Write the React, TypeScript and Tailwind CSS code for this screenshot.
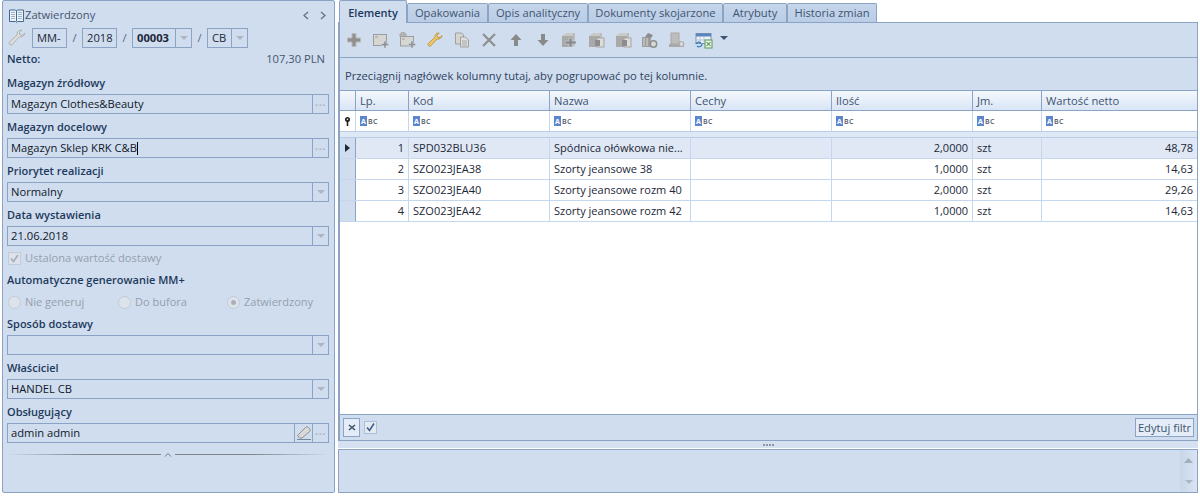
import React from "react";

const gridCols = "grid grid-cols-[16px_53px_141px_141px_141px_141px_69px_155px]";

const rows = [
  { lp: 1, kod: "SPD032BLU36", nazwa: "Spódnica ołówkowa nie...", ilosc: "2,0000", wartosc: "48,78" },
  { lp: 2, kod: "SZO023JEA38", nazwa: "Szorty jeansowe 38", ilosc: "1,0000", wartosc: "14,63" },
  { lp: 3, kod: "SZO023JEA40", nazwa: "Szorty jeansowe rozm 40", ilosc: "2,0000", wartosc: "29,26" },
  { lp: 4, kod: "SZO023JEA42", nazwa: "Szorty jeansowe rozm 42", ilosc: "1,0000", wartosc: "14,63" },
];

const headers = ["Lp.", "Kod", "Nazwa", "Cechy", "Ilość", "Jm.", "Wartość netto"];
const tabs = [
  { name: "Opakowania", w: "w-[81px]" },
  { name: "Opis analityczny", w: "w-[100px]" },
  { name: "Dokumenty skojarzone", w: "w-[135px]" },
  { name: "Atrybuty", w: "w-[64px]" },
  { name: "Historia zmian", w: "w-[90px]" },
];

function Caret({ color = "#abb5c3" }: { color?: string }) {
  return (
    <svg width="8" height="4" viewBox="0 0 8 4">
      <path d="M0 0h8L4 4z" fill={color} />
    </svg>
  );
}

function Dots() {
  return <span className="text-[11px] font-bold leading-none tracking-[0.5px] text-[#a9b4c4]">···</span>;
}

function SideButton({ children, w = "w-4" }: { children: React.ReactNode; w?: string }) {
  return (
    <div className={`flex h-full ${w} shrink-0 items-center justify-center border-l border-[#8ba3c4]`}>{children}</div>
  );
}

function Field({
  label,
  value,
  cursor,
  children,
}: {
  label: string;
  value?: string;
  cursor?: boolean;
  children: React.ReactNode;
}) {
  return (
    <div className="mb-1 flex flex-col">
      <div className="flex h-5 items-center pb-[3px] text-[11px] font-semibold text-[#1e395b]">{label}</div>
      <div className="mr-[5px] flex h-5 items-center justify-between border border-[#8ba3c4]">
        <span className="flex h-full items-center pl-[3px] text-[#101828]">
          {value}
          {cursor && <span className="h-[13px] w-px bg-black" />}
        </span>
        <div className="flex h-full">{children}</div>
      </div>
    </div>
  );
}

function BookIcon() {
  return (
    <svg width="15" height="14" viewBox="0 0 15 14" className="shrink-0">
      <path d="M.5 1h6l1 1 1-1h6v11.500h-6l-1 1-1-1h-6z" fill="#eef3f8" stroke="#3d6a94" />
      <path d="M7.500 2v10.500" stroke="#3d6a94" />
      <path d="M2 3.500h4M2 5.500h4M2 7.500h4M2 9.500h4M9 3.500h4M9 5.500h4M9 7.500h4M9 9.500h4" stroke="#9db2c8" />
    </svg>
  );
}

function WrenchIcon({ fill, stroke, size = 16 }: { fill: string; stroke: string; size?: number }) {
  return (
    <svg width={size} height={size} viewBox="0 0 16 16">
      <path
        d="M15 3.500a3.800 3.800 0 0 1-5 3.400L4 13.600a1.700 1.700 0 0 1-2.600-2.200L8 5.300A3.800 3.800 0 0 1 12.200 1L10 3.400l1 1.900 2 .3z"
        fill={fill}
        stroke={stroke}
        strokeWidth="0.800"
      />
    </svg>
  );
}

function Plus() {
  return (
    <svg width="16" height="16" viewBox="0 0 16 16">
      <path d="M6 1.500h4v4.500h4.500v4H10v4.500H6V10H1.500V6H6z" fill="#8f8f8f" stroke="#b9b9b9" />
    </svg>
  );
}

function WindowPlus({ gear }: { gear?: boolean }) {
  return (
    <svg width="18" height="17" viewBox="0 0 18 17">
      {gear && <circle cx="4" cy="3.500" r="3.200" fill="#b5b5b5" stroke="#9c9c9c" strokeDasharray="1.500 1" />}
      <rect x="1.500" y={gear ? 4.500 : 2.500} width="13" height={gear ? 9.500 : 11} fill="#d6d6d2" stroke="#9d9d9d" />
      <path d={gear ? "M3 7h3" : "M3 5h3"} stroke="#9d9d9d" />
      <path d="M12 9h2v2.500h2.500v2H14V16h-2v-2.500H9.500v-2H12z" fill="#8f8f8f" stroke="#cfddef" strokeWidth="0.500" />
    </svg>
  );
}

function CopyIcon() {
  return (
    <svg width="16" height="16" viewBox="0 0 16 16">
      <path d="M1.500 1h6l2 2v9h-8z" fill="#d5d5d2" stroke="#a0a0a0" />
      <path d="M6.500 5h5l3 3v7h-8z" fill="#dededb" stroke="#a0a0a0" />
      <path d="M8 9h5M8 11h5M8 13h5" stroke="#a8a8a8" />
    </svg>
  );
}

function CrossIcon() {
  return (
    <svg width="16" height="16" viewBox="0 0 16 16">
      <path d="M2 2l12 12M14 2L2 14" stroke="#8e8e8e" strokeWidth="2.200" />
    </svg>
  );
}

function ArrowIcon({ down }: { down?: boolean }) {
  return (
    <svg width="12" height="14" viewBox="0 0 12 14">
      <path d={down ? "M4 1h4v6h3.500L6 13 .5 7H4z" : "M4 13h4V7h3.500L6 1 .5 7H4z"} fill="#8a8a8a" />
    </svg>
  );
}

function BoxIcon({ kind }: { kind: "plus" | "in" | "out" }) {
  return (
    <svg width="17" height="16" viewBox="0 0 17 16">
      <path d="M1 4l4-3h8v3z" fill="#c9c9c6" />
      <rect x="1" y="4" width="11" height="11" fill="#a9a9a7" />
      <rect x="12" y="1" width="2" height="13" fill="#bcbcba" />
      {kind === "plus" ? (
        <path d="M8 6h3v3h4v3h-4v3H8v-3H4V9h4z" fill="#8c8c8c" stroke="#cfddef" strokeWidth="0.500" />
      ) : (
        <>
          <rect x="9" y="6" width="7" height="9" fill="#dcdcda" stroke="#a5a5a5" />
          <rect x="7" y="8" width="5" height="6" fill="#8c8c8c" />
        </>
      )}
    </svg>
  );
}

function GearBoxIcon() {
  return (
    <svg width="18" height="17" viewBox="0 0 18 17">
      <rect x="1" y="5" width="9" height="10" fill="#9e9e9c" />
      <path d="M4 5l3-4 5 2-2 3z" fill="#8c8c8c" />
      <path d="M3 6v8M6 6v8" stroke="#d5d5d3" />
      <circle cx="12.500" cy="12" r="3.200" fill="#dadad8" stroke="#8e8e8e" strokeWidth="1.500" />
    </svg>
  );
}

function ServerIcon() {
  return (
    <svg width="18" height="17" viewBox="0 0 18 17">
      <rect x="3" y="1" width="8" height="11" fill="#bdbdbb" stroke="#a8a8a6" />
      <rect x="1" y="12" width="15" height="3" fill="#a8a8a6" />
      <circle cx="13.500" cy="12" r="2.500" fill="#d7d7d5" stroke="#a5a5a3" />
    </svg>
  );
}

function ExcelIcon() {
  return (
    <svg width="18" height="17" viewBox="0 0 18 17">
      <rect x="1" y="1.500" width="15" height="10" fill="#eef3f8" stroke="#7d93ad" />
      <rect x="1" y="1.500" width="15" height="3" fill="#5b86bd" />
      <path d="M5 5v6M9 5v6M2 8h13" stroke="#b8c7d9" />
      <path d="M1 12a3 3 0 0 1 5-1M7 12a3 3 0 0 1-5 2" fill="none" stroke="#2f7fc1" strokeWidth="1.200" />
      <rect x="10" y="8" width="7" height="8" fill="#e8f1e4" stroke="#5d9a5e" />
      <path d="M11.500 10l4 4M15.500 10l-4 4" stroke="#2f7a34" />
    </svg>
  );
}

function EraserIcon() {
  return (
    <svg width="16" height="16" viewBox="0 0 16 16">
      <path d="M1.500 10.500L9.500 2.500a2 2 0 0 1 3 0l1 1a2 2 0 0 1 0 3L6 13H3.500z" fill="#d9d9d9" stroke="#8f8f8f" />
      <path d="M1 14.500h14" stroke="#7c8796" />
    </svg>
  );
}

function AbcIcon() {
  return (
    <span className="flex items-center gap-[1px] leading-none">
      <span className="flex h-[10px] w-[7px] items-center justify-center bg-[#5b86cf] text-[7px] font-bold text-white">A</span>
      <span className="text-[7px] font-semibold tracking-[0.3px] text-[#4c5566]">BC</span>
    </span>
  );
}

function ToolButton({ children }: { children: React.ReactNode }) {
  return <div className="flex h-full w-[26.9px] shrink-0 items-center justify-center">{children}</div>;
}

function RadioItem({ label, checked, w }: { label: string; checked?: boolean; w: string }) {
  return (
    <div className={`flex items-center gap-[4px] ${w}`}>
      <span className="flex h-[13px] w-[13px] items-center justify-center rounded-full border border-[#c3cbd6] bg-[#dde3ea]">
        {checked && <span className="h-[5px] w-[5px] rounded-full bg-[#a9b0ba]" />}
      </span>
      <span className="pb-px text-[11px] text-[#969fac]">{label}</span>
    </div>
  );
}

export default function App(): React.JSX.Element {
  return (
    <div
      className="flex h-[496px] w-[1200px] items-start overflow-hidden whitespace-nowrap bg-white pl-[2px] text-[11.2px] leading-none"
      style={{ fontFamily: '"Open Sans", "Noto Sans", sans-serif' }}
    >
      <aside className="flex h-[493px] w-[333px] shrink-0 flex-col rounded-[2px] border border-[#8ba3c4] bg-[#cfddef] pl-1">
        <div className="mt-[7px] flex h-[15px] items-center pl-[2px] pr-[7px]">
          <BookIcon />
          <span className="ml-[1px] flex-1 pb-[2px] text-[#46566e]">Zatwierdzony</span>
          <span className="pr-[7px] text-[#5f6d80]">
            <svg width="8" height="9" viewBox="0 0 8 9"><path d="M6 1L2 4.500 6 8" fill="none" stroke="currentColor" strokeWidth="1.200" /></svg>
          </span>
          <span className="pl-[2px] text-[#5f6d80]">
            <svg width="8" height="9" viewBox="0 0 8 9"><path d="M2 1l4 3.500L2 8" fill="none" stroke="currentColor" strokeWidth="1.200" /></svg>
          </span>
        </div>

        <div className="mt-[5px] flex h-5 items-center text-[#1c2738]">
          <div className="flex w-[25px] justify-start pl-[1px]">
            <WrenchIcon fill="#dcdcdc" stroke="#adadad" size={18} />
          </div>
          <div className="flex h-full w-[35px] items-center border border-[#8ba3c4] pl-1">MM-</div>
          <span className="w-[15px] text-center text-[#5a6a80]">/</span>
          <div className="flex h-full w-[35px] items-center border border-[#8ba3c4] pl-1">2018</div>
          <span className="w-[15px] text-center text-[#5a6a80]">/</span>
          <div className="flex h-full w-[60px] items-center justify-between border border-[#8ba3c4] pl-1">
            <span className="font-bold">00003</span>
            <SideButton><Caret /></SideButton>
          </div>
          <span className="w-[15px] text-center text-[#5a6a80]">/</span>
          <div className="flex h-full w-[41px] items-center justify-between border border-[#8ba3c4] pl-1">
            CB
            <SideButton><Caret /></SideButton>
          </div>
        </div>

        <div className="mt-[3px] flex h-[18px] items-center justify-between pb-[3px] pr-[9px]">
          <span className="text-[11px] font-semibold text-[#1e395b]">Netto:</span>
          <span className="text-[#46566e]">107,30 PLN</span>
        </div>

        <div className="h-[5px]" />
        <Field label="Magazyn źródłowy" value="Magazyn Clothes&Beauty">
          <SideButton><Dots /></SideButton>
        </Field>
        <Field label="Magazyn docelowy" value="Magazyn Sklep KRK C&B" cursor>
          <SideButton><Dots /></SideButton>
        </Field>
        <Field label="Priorytet realizacji" value="Normalny">
          <SideButton><Caret /></SideButton>
        </Field>
        <Field label="Data wystawienia" value="21.06.2018">
          <SideButton><Caret /></SideButton>
        </Field>

        <div className="flex h-4 items-center gap-[4px] pl-[1px] text-[#969fac]">
          <span className="flex h-[13px] w-[13px] items-center justify-center border border-[#c3cbd6] bg-[#dde3ea]">
            <svg width="9" height="9" viewBox="0 0 9 9"><path d="M1 4.500l2.500 3L8 1" fill="none" stroke="#a9b0ba" strokeWidth="1.800" /></svg>
          </span>
          Ustalona wartość dostawy
        </div>
        <div className="mt-[5px] flex h-5 items-center pb-[3px] text-[11px] font-semibold text-[#1e395b]">Automatyczne generowanie MM+</div>
        <div className="mt-[1px] flex h-5 items-center pl-[1px]">
          <RadioItem label="Nie generuj" w="w-[110px]" />
          <RadioItem label="Do bufora" w="w-[109px]" />
          <RadioItem label="Zatwierdzony" checked w="w-[100px]" />
        </div>
        <div className="h-[3px]" />
        <Field label="Sposób dostawy">
          <SideButton><Caret /></SideButton>
        </Field>
        <Field label="Właściciel" value="HANDEL CB">
          <SideButton><Caret /></SideButton>
        </Field>
        <Field label="Obsługujący" value="admin admin">
          <SideButton w="w-[18px]"><EraserIcon /></SideButton>
          <SideButton><Dots /></SideButton>
        </Field>

        <div className="mr-[5px] flex h-[14px] items-center gap-[3px]">
          <div className="h-px flex-1 bg-gradient-to-r from-transparent via-[#7f8690] to-[#7f8690]" />
          <svg width="8" height="5" viewBox="0 0 8 5"><path d="M1 4.500L4 1.500l3 3" fill="none" stroke="#6c7482" /></svg>
          <div className="h-px flex-1 bg-gradient-to-l from-transparent via-[#7f8690] to-[#7f8690]" />
        </div>
      </aside>

      <main className="ml-[3px] flex w-[860px] shrink-0 flex-col">
        <div className="flex h-[22px] items-end pl-px text-[#3f5470]">
          <div className="z-10 -mb-px flex h-[23px] w-[68px] items-center justify-center rounded-t-[2px] border border-b-0 border-[#8ba3c4] bg-[#cfddef] text-[11px] font-semibold text-[#1e395b]">
            Elementy
          </div>
          {tabs.map((t) => (
            <div
              key={t.name}
              className={`flex h-[19px] ${t.w} items-center justify-center rounded-t-[2px] border border-b-0 border-[#8ba3c4] bg-gradient-to-b from-[#c6d6ea] to-[#b9cde6]`}
            >
              {t.name}
            </div>
          ))}
        </div>

        <section className="flex h-[419px] flex-col border border-l-2 border-[#8ba3c4] bg-[#cfddef]">
          <div className="flex h-[34px] shrink-0 items-center pl-px">
            <ToolButton><Plus /></ToolButton>
            <ToolButton><WindowPlus /></ToolButton>
            <ToolButton><WindowPlus gear /></ToolButton>
            <ToolButton><WrenchIcon fill="#f2c566" stroke="#b98c2f" /></ToolButton>
            <ToolButton><CopyIcon /></ToolButton>
            <ToolButton><CrossIcon /></ToolButton>
            <ToolButton><ArrowIcon /></ToolButton>
            <ToolButton><ArrowIcon down /></ToolButton>
            <ToolButton><BoxIcon kind="plus" /></ToolButton>
            <ToolButton><BoxIcon kind="in" /></ToolButton>
            <ToolButton><BoxIcon kind="out" /></ToolButton>
            <ToolButton><GearBoxIcon /></ToolButton>
            <ToolButton><ServerIcon /></ToolButton>
            <ToolButton><ExcelIcon /></ToolButton>
            <div className="ml-[1px] flex w-3 justify-center pb-1"><Caret color="#3f5470" /></div>
          </div>

          <div className="flex h-[33px] shrink-0 items-center border-t border-[#8ba3c4] pl-[5px] pt-[3px] text-[#2f435e]">
            Przeciągnij nagłówek kolumny tutaj, aby pogrupować po tej kolumnie.
          </div>

          <div className={`${gridCols} h-[21px] shrink-0 border-y border-[#8ba3c4] bg-gradient-to-b from-[#f4f8fd] to-[#d9e5f5] text-[#3f5470]`}>
            <div className="border-r border-[#8ba3c4]" />
            {headers.map((h) => (
              <div key={h} className="flex items-center border-r border-[#8ba3c4] pl-1 last:border-r-0">{h}</div>
            ))}
          </div>

          <div className={`${gridCols} h-[21px] shrink-0 border-b border-[#b9cdea] bg-white`}>
            <div className="flex items-center justify-center border-r border-[#c5d6ef]">
              <svg width="7" height="9" viewBox="0 0 7 9">
                <circle cx="3.500" cy="2.500" r="2.500" fill="#222" />
                <path d="M2.700 4h1.600v5H2.700z" fill="#222" />
                <circle cx="3.500" cy="2.300" r="0.800" fill="#fff" />
              </svg>
            </div>
            {headers.map((h) => (
              <div key={h} className="flex items-center border-r border-[#c5d6ef] pl-1 last:border-r-0"><AbcIcon /></div>
            ))}
          </div>

          <div className="h-[5px] shrink-0 bg-[#dfe8f5]" />

          <div className="flex-1 border-t border-[#b9cdea] bg-white text-[11px] text-[#1c2738]">
            {rows.map((r, i) => (
              <div
                key={r.lp}
                className={`${gridCols} h-[21px] border-b border-[#c5d6ef] ${i === 0 ? "bg-[#dfe8f4]" : "bg-white"}`}
              >
                <div className="flex items-center justify-center border-r border-[#8ba3c4] bg-[#cfddef]">
                  {i === 0 && <svg width="5" height="8" viewBox="0 0 5 8"><path d="M0 0l5 4-5 4z" fill="#1c2738" /></svg>}
                </div>
                <div className="flex items-center justify-end border-r border-[#c5d6ef] pb-[2px] pr-1">{r.lp}</div>
                <div className="flex items-center border-r border-[#c5d6ef] pb-[2px] pl-1">{r.kod}</div>
                <div className="flex items-center border-r border-[#c5d6ef] pb-[2px] pl-1">{r.nazwa}</div>
                <div className="border-r border-[#c5d6ef]" />
                <div className="flex items-center justify-end border-r border-[#c5d6ef] pb-[2px] pr-1">{r.ilosc}</div>
                <div className="flex items-center border-r border-[#c5d6ef] pb-[2px] pl-1">szt</div>
                <div className="flex items-center justify-end pb-[2px] pr-1">{r.wartosc}</div>
              </div>
            ))}
          </div>

          <div className="flex h-[26px] shrink-0 items-center border-t border-[#8ba3c4] pl-[3px] pr-[3px]">
            <div className="flex h-[19px] w-[17px] items-center justify-center border border-[#8ba3c4] bg-[#e3ecf7]">
              <svg width="8" height="7" viewBox="0 0 8 7"><path d="M1 1l6 5M7 1L1 6" stroke="#3f5470" strokeWidth="1.600" /></svg>
            </div>
            <div className="ml-1 flex h-[13px] w-[13px] items-center justify-center border border-[#a9c0e0] bg-[#e6e9ee]">
              <svg width="9" height="9" viewBox="0 0 9 9"><path d="M1 4.500l2.500 3L8 .5" fill="none" stroke="#3f5f92" strokeWidth="1.600" /></svg>
            </div>
            <div className="ml-auto flex h-[19px] w-[59px] items-center justify-center border border-[#8ba3c4] bg-[#e3ecf7] text-[#3f5470]">
              Edytuj filtr
            </div>
          </div>
        </section>

        <div className="flex h-[8px] items-center justify-center gap-[1px] border-b border-white bg-[#d5e1f0]">
          <span className="h-[2px] w-[2px] bg-[#8a97a8]" />
          <span className="h-[2px] w-[2px] bg-[#8a97a8]" />
          <span className="h-[2px] w-[2px] bg-[#8a97a8]" />
          <span className="h-[2px] w-[2px] bg-[#8a97a8]" />
        </div>
        <div className="flex h-[44px] justify-end border border-[#8ba3c4] bg-[#cfddef]">
          <div className="flex w-[17px] flex-col items-center justify-between bg-gradient-to-r from-[#c7d6ea] to-[#d9e4f2] py-2">
            <svg width="9" height="5" viewBox="0 0 9 5"><path d="M0 5h9L4.500 0z" fill="#a3aebd" /></svg>
            <Caret />
          </div>
        </div>
      </main>
    </div>
  );
}
